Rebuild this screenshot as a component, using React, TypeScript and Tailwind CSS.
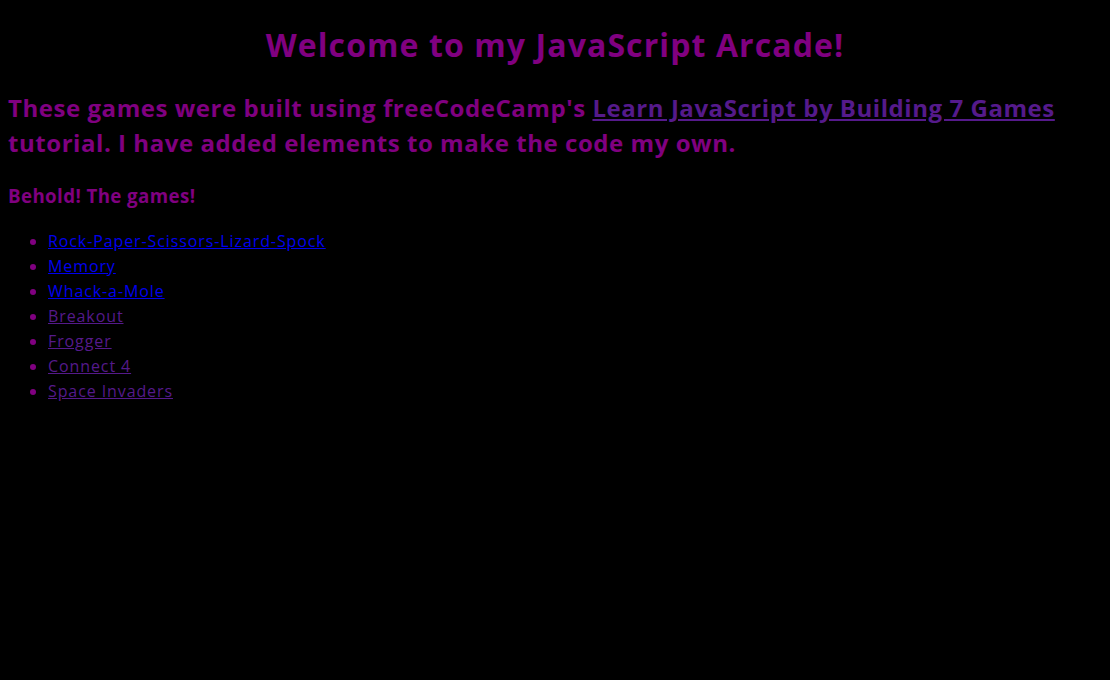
const games = [
  { name: 'Rock-Paper-Scissors-Lizard-Spock', visited: false },
  { name: 'Memory', visited: false },
  { name: 'Whack-a-Mole', visited: false },
  { name: 'Breakout', visited: true },
  { name: 'Frogger', visited: true },
  { name: 'Connect 4', visited: true },
  { name: 'Space Invaders', visited: true },
]

export default function App() {
  return (
    <div className="min-h-[680px] bg-black px-2 pt-[21px] text-[#800080] font-['Open_Sans',sans-serif]">
      <h1 className="text-center text-[32px] font-bold leading-[48px] tracking-[1.1px]">
        Welcome to my JavaScript Arcade!
      </h1>

      <h2 className="mt-[21px] text-[24px] font-bold leading-[35px] tracking-[0.55px]">
        These games were built using freeCodeCamp's{' '}
        <a href="#" className="text-[#551a8b] underline">
          Learn JavaScript by Building 7 Games
        </a>{' '}
        tutorial. I have added elements to make the code my own.
      </h2>

      <h3 className="mt-[22px] text-[18.72px] font-bold leading-[28px] tracking-[0.4px]">
        Behold! The games!
      </h3>

      <ul className="mt-[19px] list-disc pl-10">
        {games.map((g) => (
          <li key={g.name} className="text-[16px] leading-[25px] tracking-[0.9px]">
            <a href="#" className={`underline ${g.visited ? 'text-[#551a8b]' : 'text-[#0000ee]'}`}>
              {g.name}
            </a>
          </li>
        ))}
      </ul>
    </div>
  )
}
